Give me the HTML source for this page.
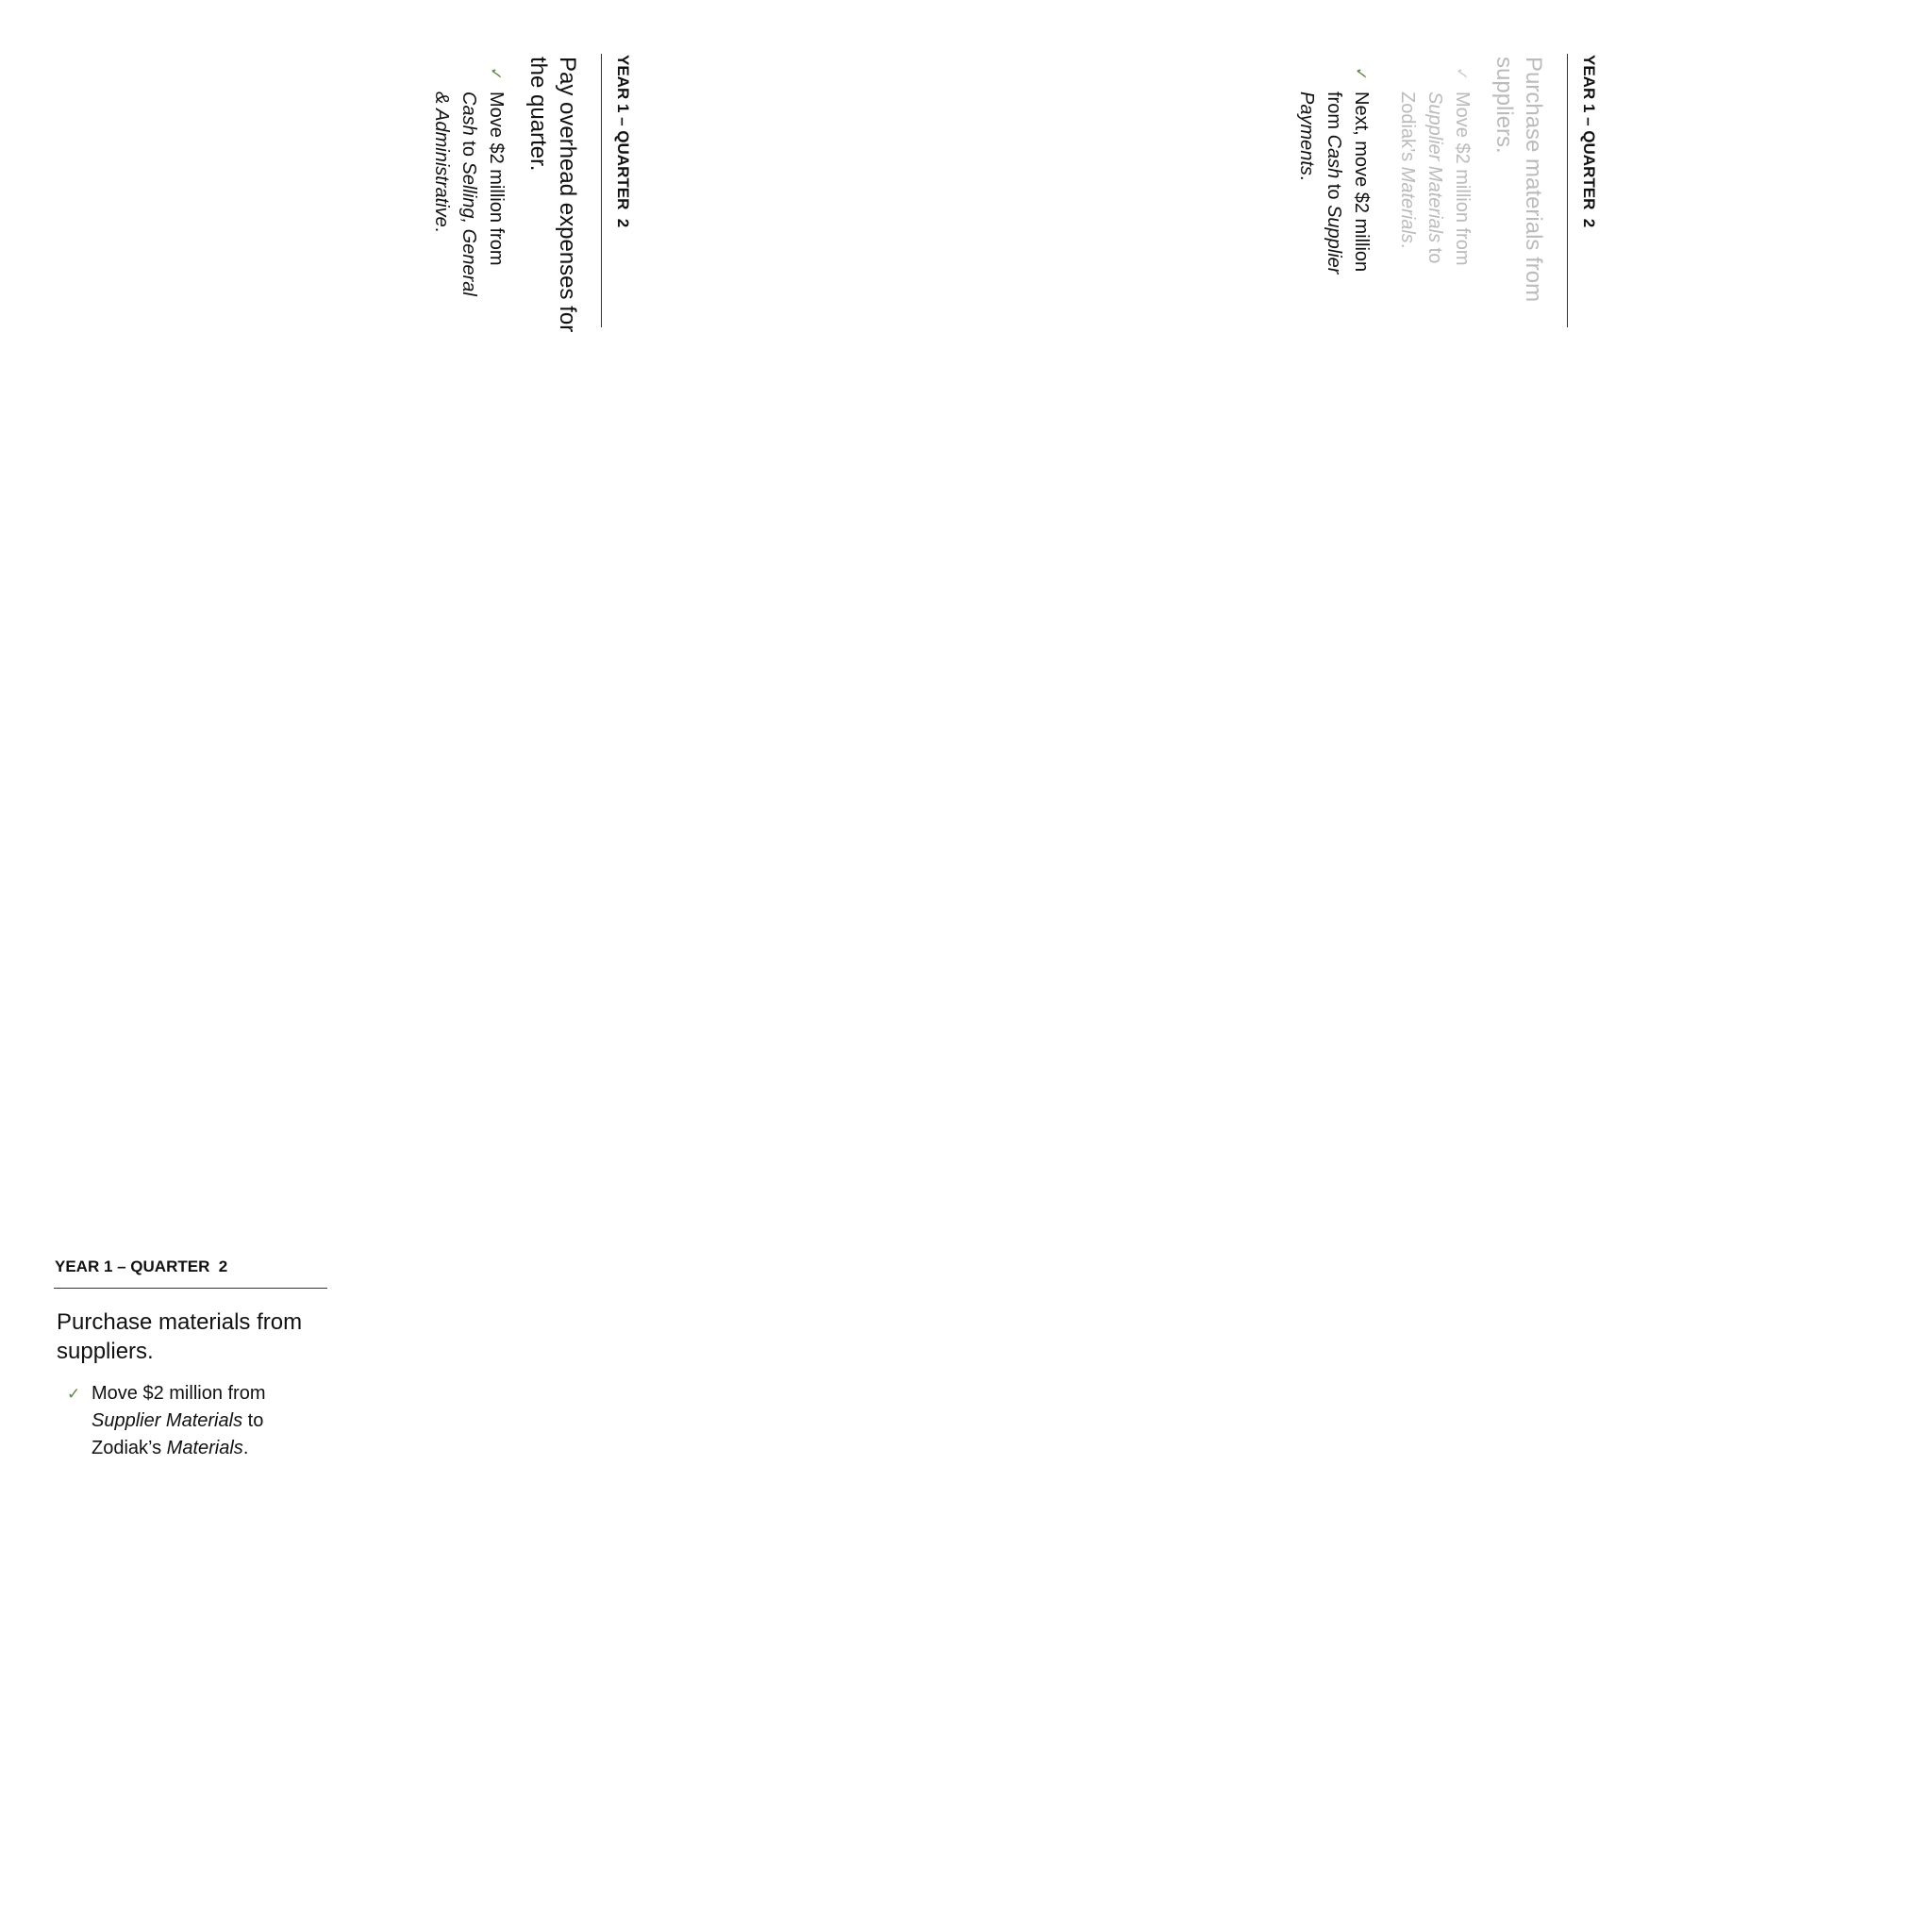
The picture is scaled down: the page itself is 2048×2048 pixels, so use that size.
<!DOCTYPE html>
<html><head><meta charset="utf-8"><style>
html,body{margin:0;padding:0;background:#fff;width:2048px;height:2048px;overflow:hidden}
.card{position:absolute;width:300px;height:300px;font-family:"Liberation Sans",sans-serif;color:#111;transform-origin:0 0}
.h{position:absolute;left:1px;top:13px;font-weight:bold;font-size:17px;white-space:nowrap}
.ln{position:absolute;left:0;top:45px;width:290px;height:1px;background:#333}
.b{position:absolute;left:3px;top:66px;font-size:24px;line-height:31px;white-space:nowrap}
.bl{position:absolute;left:40px;font-size:20px;line-height:29px;white-space:nowrap}
.ck{position:absolute;left:-26px;top:0;font-size:17px;color:#5a8a3a}
.g{color:#bbb}.g .ck{color:#ccc}
</style></head><body>

<div class="card" style="left:57px;top:1320px">
<div class="h">YEAR 1 – QUARTER&nbsp; 2</div><div class="ln"></div>
<div class="b">Purchase materials from<br>suppliers.</div>
<div class="bl" style="top:143px"><span class="ck">✓</span>Move $2 million from<br><i>Supplier Materials</i> to<br>Zodiak’s <i>Materials</i>.</div>
</div>

<div class="card" style="left:683px;top:57px;transform:rotate(90deg)">
<div class="h">YEAR 1 – QUARTER&nbsp; 2</div><div class="ln"></div>
<div class="b">Pay overhead expenses for<br>the quarter.</div>
<div class="bl" style="top:143px"><span class="ck">✓</span>Move $2 million from<br><i>Cash</i> to <i>Selling, General</i><br><i>&amp; Administrative</i>.</div>
</div>

<div class="card" style="left:1707px;top:57px;transform:rotate(90deg)">
<div class="h">YEAR 1 – QUARTER&nbsp; 2</div><div class="ln"></div>
<div class="b g">Purchase materials from<br>suppliers.</div>
<div class="bl g" style="top:143px"><span class="ck">✓</span>Move $2 million from<br><i>Supplier Materials</i> to<br>Zodiak’s <i>Materials</i>.</div>
<div class="bl" style="top:250px"><span class="ck">✓</span>Next, move $2 million<br>from <i>Cash</i> to <i>Supplier</i><br><i>Payments</i>.</div>
</div>

</body></html>
